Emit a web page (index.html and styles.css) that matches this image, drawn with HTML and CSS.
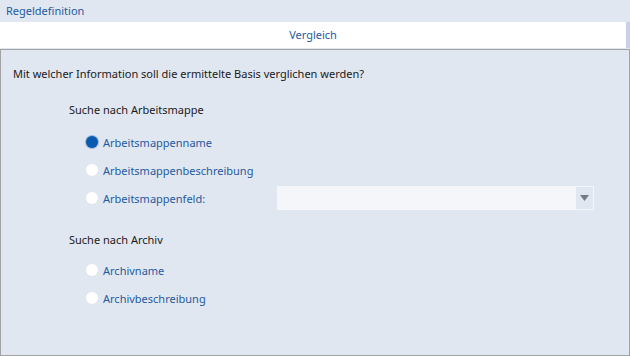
FILE: index.html
```html
<!DOCTYPE html>
<html lang="de">
<head>
    <meta charset="UTF-8">
    <title>Regeldefinition</title>
    <link rel="stylesheet" href="styles.css">
</head>
<body>
    <div class="kopf">Regeldefinition</div>

    <div class="tabs">
        <div class="tab">Vergleich</div>
        <div class="rand"></div>
    </div>

    <main class="panel">
        <p class="frage">Mit welcher Information soll die ermittelte Basis verglichen werden?</p>

        <div class="gruppe">
            <div class="titel">Suche nach Arbeitsmappe</div>

            <label class="option">
                <span class="radio aktiv"></span>
                <span class="text">Arbeitsmappenname</span>
            </label>
            <label class="option">
                <span class="radio"></span>
                <span class="text">Arbeitsmappenbeschreibung</span>
            </label>
            <div class="option">
                <span class="radio"></span>
                <span class="text breit">Arbeitsmappenfeld:</span>
                <div class="auswahl">
                    <div class="feld"></div>
                    <div class="pfeil">
                        <svg width="9" height="6" viewBox="0 0 9 6"><path d="M0 0H9L4.5 6Z" fill="#777a80"/></svg>
                    </div>
                </div>
            </div>
        </div>

        <div class="gruppe">
            <div class="titel">Suche nach Archiv</div>

            <label class="option">
                <span class="radio"></span>
                <span class="text">Archivname</span>
            </label>
            <label class="option">
                <span class="radio"></span>
                <span class="text">Archivbeschreibung</span>
            </label>
        </div>
    </main>
</body>
</html>
```

FILE: styles.css
```css
body {
    margin: 0;
    width: 630px;
    height: 356px;
    background: #e1e7f1;
    font-family: "Noto Sans", "Open Sans", sans-serif;
    font-size: 11px;
    color: #1a1a1a;
    overflow: hidden;
}

.kopf {
    height: 22px;
    line-height: 22px;
    padding-left: 6px;
    color: #1f5a9e;
}

.tabs {
    display: flex;
    height: 26px;
}

.tab {
    flex: 1;
    background: #fff;
    color: #1f5a9e;
    text-align: center;
    line-height: 26px;
}

.rand {
    width: 4px;
    background: #c8d0ea;
}

.panel {
    box-sizing: border-box;
    height: 307px;
    margin-top: 1px;
    border: 1px solid #a3a3a3;
    padding: 16px 12px 0 12px;
}

.frage {
    margin: 0 0 20px 0;
    line-height: 16px;
}

.gruppe {
    padding-left: 56px;
    margin-bottom: 20px;
}

.titel {
    line-height: 16px;
    margin-bottom: 10px;
}

.gruppe + .gruppe .titel {
    margin-bottom: 8px;
}

.option {
    display: flex;
    align-items: center;
    height: 28px;
    padding-left: 17px;
}

.radio {
    width: 12px;
    height: 12px;
    border-radius: 50%;
    background: #fff;
    margin-right: 5px;
}

.radio.aktiv {
    background: #0a5bb0;
    box-shadow: 0 0 0 1px #9bb8dc;
}

.text {
    color: #1f5a9e;
}

.breit {
    width: 174px;
}

.auswahl {
    display: flex;
    width: 317px;
    height: 24px;
    background: #f5f6fa;
}

.feld {
    flex: 1;
}

.pfeil {
    width: 17px;
    margin: 1px;
    background: #e1e7f1;
    display: flex;
    align-items: center;
    justify-content: center;
}
```
